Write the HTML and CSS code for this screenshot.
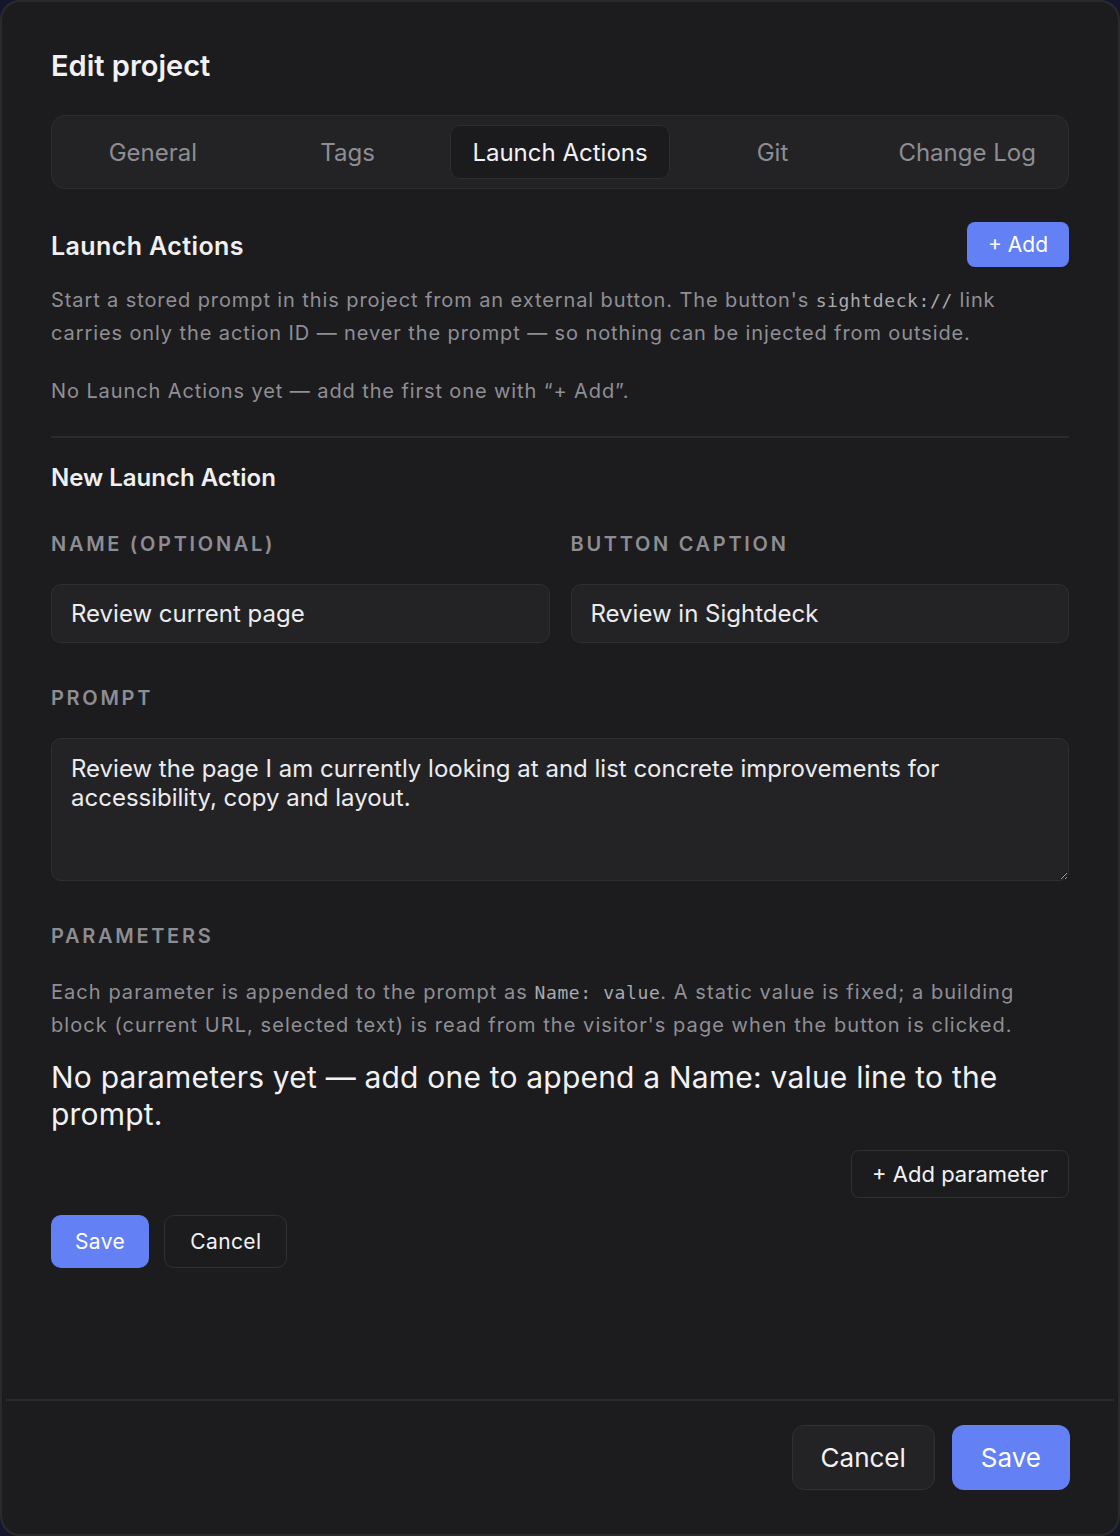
FILE: index.html
```html
<!DOCTYPE html>
<html lang="en">
<head>
  <meta charset="UTF-8" />
  <title>Edit project</title>
  <meta name="viewport" content="width=device-width, initial-scale=1" />
  <link rel="stylesheet" href="styles.css">
</head>
<body>
  <div class="dialog">
    <div class="dialog-body">
      <h1 class="dialog-title">Edit project</h1>

      <nav class="tabs">
        <button class="tab" type="button">General</button>
        <button class="tab" type="button">Tags</button>
        <button class="tab active" type="button">Launch Actions</button>
        <button class="tab" type="button">Git</button>
        <button class="tab" type="button">Change Log</button>
      </nav>

      <div class="section-head">
        <h2>Launch Actions</h2>
        <button class="btn btn-primary btn-add" type="button">+ Add</button>
      </div>
      <p class="desc">Start a stored prompt in this project from an external button. The button's <code>sightdeck://</code> link carries only the action ID — never the prompt — so nothing can be injected from outside.</p>
      <p class="desc empty">No Launch Actions yet — add the first one with “+ Add”.</p>

      <hr class="divider" />

      <h3 class="form-title">New Launch Action</h3>

      <form class="action-form" onsubmit="return false;">
        <div class="row">
          <div class="field">
            <label for="name">Name (optional)</label>
            <input type="text" id="name" value="Review current page" />
          </div>
          <div class="field">
            <label for="caption">Button caption</label>
            <input type="text" id="caption" value="Review in Sightdeck" />
          </div>
        </div>

        <div class="field prompt-field">
          <label for="prompt">Prompt</label>
          <textarea id="prompt" rows="4">Review the page I am currently looking at and list concrete improvements for accessibility, copy and layout.</textarea>
        </div>

        <div class="field params-field">
          <label>Parameters</label>
          <p class="help">Each parameter is appended to the prompt as <code>Name: value</code>. A static value is fixed; a building block (current URL, selected text) is read from the visitor's page when the button is clicked.</p>
          <p class="params-empty">No parameters yet — add one to append a Name: value line to the prompt.</p>
          <div class="params-actions">
            <button class="btn btn-outline btn-param" type="button">+ Add parameter</button>
          </div>
        </div>

        <div class="form-actions">
          <button class="btn btn-primary btn-sm" type="button">Save</button>
          <button class="btn btn-outline btn-sm" type="button">Cancel</button>
        </div>
      </form>
    </div>

    <div class="dialog-footer">
      <button class="btn btn-secondary btn-lg" type="button">Cancel</button>
      <button class="btn btn-primary btn-lg" type="button">Save</button>
    </div>
  </div>
</body>
</html>
```

FILE: styles.css
```css
html, body {
  margin: 0;
  height: 100%;
}
body {
  background: #15152b;
  font-family: Inter, "Noto Sans", sans-serif;
  color: #ececef;
}
.dialog {
  box-sizing: border-box;
  height: 100vh;
  background: #1c1c1e;
  border: 2px solid #2a2a2d;
  border-radius: 20px;
  display: flex;
  flex-direction: column;
  overflow: hidden;
}
.dialog-body {
  flex: 1;
  padding: 46px 49px 0;
}
.dialog-title {
  margin: 0;
  font-size: 29px;
  line-height: 36px;
  font-weight: 600;
  color: #f2f2f4;
}

/* tabs */
.tabs {
  margin-top: 31px;
  display: flex;
  gap: 11px;
  padding: 9px;
  background: #232325;
  border: 1px solid #2e2e31;
  border-radius: 14px;
}
.tab {
  flex: 1 1 0;
  height: 54px;
  padding: 0 21px;
  background: none;
  border: 1px solid transparent;
  border-radius: 10px;
  font-family: inherit;
  font-size: 24px;
  color: #8d8d93;
  white-space: nowrap;
  cursor: pointer;
}
.tab.active {
  background: #1b1b1d;
  border-color: #2e2e31;
  color: #f2f2f4;
}

/* section */
.section-head {
  margin-top: 33px;
  display: flex;
  align-items: center;
  justify-content: space-between;
}
.section-head h2 {
  margin: 3px 0 0;
  font-size: 25px;
  letter-spacing: 0.4px;
  font-weight: 600;
  color: #f0f0f2;
}
.desc {
  margin: 17px 0 0;
  font-size: 20px;
  line-height: 33px;
  letter-spacing: 0.9px;
  color: #8f8f95;
}
.desc.empty {
  margin-top: 25px;
}
code {
  font-family: "DejaVu Sans Mono", "Liberation Mono", monospace;
  font-size: 0.9em;
  letter-spacing: 0.6px;
  color: #a9a9ae;
}
.divider {
  margin: 28px 0 0;
  border: none;
  border-top: 2px solid #2b2b2e;
}
.form-title {
  margin: 26px 0 0;
  font-size: 24px;
  line-height: 28px;
  font-weight: 600;
  color: #f0f0f2;
}

/* form */
.row {
  margin-top: 40px;
  display: flex;
  gap: 21px;
}
.row .field {
  flex: 1;
}
.field label {
  display: block;
  font-size: 20px;
  line-height: 24px;
  font-weight: 600;
  letter-spacing: 2.7px;
  text-transform: uppercase;
  color: #8d8d93;
}
.field input,
.field textarea {
  display: block;
  width: 100%;
  box-sizing: border-box;
  margin-top: 28px;
  background: #232325;
  border: 1px solid #2f2f32;
  border-radius: 10px;
  font-family: inherit;
  font-size: 24px;
  color: #ececef;
  color-scheme: dark;
}
.field input {
  height: 59px;
  padding: 0 19px;
}
.field textarea {
  height: 143px;
  padding: 15px 19px;
  line-height: 29px;
  resize: vertical;
}
.prompt-field,
.params-field {
  margin-top: 43px;
}
.help {
  margin: 28px 0 0;
  font-size: 20px;
  line-height: 33px;
  letter-spacing: 1.05px;
  color: #8f8f95;
}
.params-empty {
  margin: 17px 0 0;
  font-size: 30px;
  line-height: 37px;
  letter-spacing: 0.2px;
  color: #f2f2f4;
}
.params-actions {
  margin-top: 17px;
  display: flex;
  justify-content: flex-end;
}
.form-actions {
  margin-top: 17px;
  display: flex;
  gap: 15px;
}

/* buttons */
.btn {
  font-family: inherit;
  border-radius: 8px;
  border: 1px solid transparent;
  cursor: pointer;
  color: #f2f2f4;
}
.btn-primary {
  background: #6381f5;
  color: #fff;
}
.btn-primary:hover {
  background: #5370e8;
}
.btn-outline {
  background: transparent;
  border-color: #303033;
}
.btn-secondary {
  background: #232325;
  border-color: #303033;
}
.btn-add {
  height: 45px;
  padding: 0 20px;
  font-size: 21px;
}
.btn-param {
  height: 48px;
  padding: 0 20px;
  font-size: 22px;
}
.btn-sm {
  height: 53px;
  padding: 0 23px;
  font-size: 21px;
  letter-spacing: 0.4px;
  border-radius: 10px;
}
.btn-outline.btn-sm {
  padding: 0 25px;
}
.btn-lg {
  height: 65px;
  padding: 0 28px;
  font-size: 26px;
  border-radius: 12px;
}

/* footer */
.dialog-footer {
  margin: 0 4px;
  padding: 24px 44px 44px;
  border-top: 2px solid #29292c;
  display: flex;
  justify-content: flex-end;
  gap: 17px;
}
```
